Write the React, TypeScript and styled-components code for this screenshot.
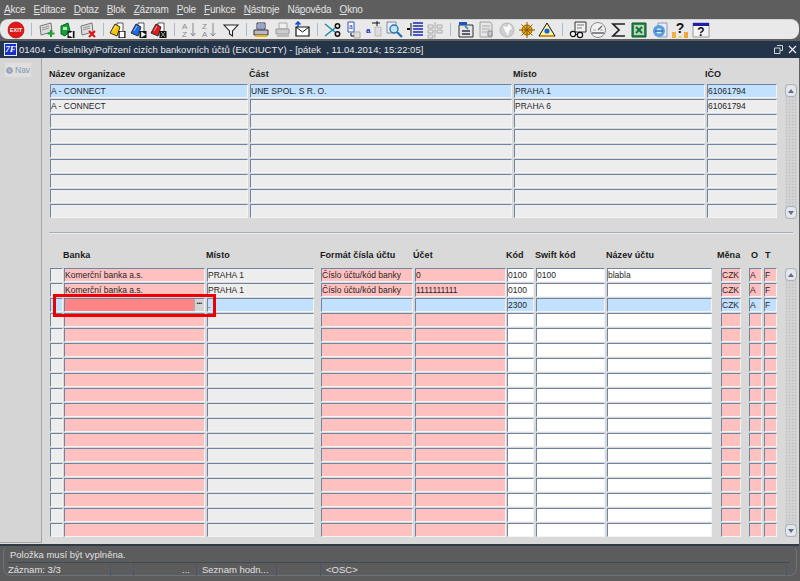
import React from "react";
import styled, { createGlobalStyle } from "styled-components";

const Global = createGlobalStyle`
  html, body { margin: 0; padding: 0; width: 800px; height: 581px; overflow: hidden; background: #5c5c5c; }
  body { font-family: "Liberation Sans", Arial, sans-serif; }
  #root { width: 800px; height: 581px; }
`;

const Page = styled.div`
  width: 800px; height: 581px; display: flex; flex-direction: column; background: #5e5e5e;
`;
const MenuBar = styled.nav`
  height: 19px; display: flex; align-items: center; padding-left: 4px; gap: 8.1px;
  font-size: 10px; color: #e2e2e2; flex: none; letter-spacing: -0.02em;
`;
const MenuItem = styled.span` u { text-underline-offset: 1px; } `;
const Toolbar = styled.div`
  height: 20px; flex: none; display: flex; align-items: center; padding-left: 6px;
  background: #e9e9e9; border-radius: 8px; margin-right: 1px;
  border-top: 1px solid #d2d2d2; box-sizing: border-box;
`;
const Tool = styled.span`
  width: 20.45px; height: 18px; flex: none; display: flex; align-items: center; justify-content: center;
`;
const ToolSep = styled.span`
  width: 1px; height: 13px; flex: none; margin: 0 4.6px; background: #a9bbd0;
`;
const TitleBar = styled.header`
  height: 17px; flex: none; margin-top: 2px; background: #243449; color: #e6e6e6;
  display: flex; align-items: center; padding: 0 3px 0 4px; font-size: 9.5px;
`;
const TitleLogo = styled.span`
  width: 13px; height: 13px; flex: none; background: #1530c8; border: 1px solid #e8e8ff; box-sizing: border-box;
  color: #fff; font: italic bold 9px/11px "Liberation Serif", serif; text-align: center; margin-right: 2px;
`;
const TitleText = styled.span` flex: 1; white-space: pre; `;
const WinButtons = styled.span` display: flex; gap: 5px; align-items: center; `;
const Body = styled.main`
  flex: 1; min-height: 0; display: flex; background: #d9d9d9; margin-right: 1px;
  border-bottom: 2px solid #303a44;
`;
const NavPane = styled.aside`
  width: 41px; flex: none; background: #d5d5d5; border-right: 1px solid #a6a6a6; border-bottom: 1px solid #a6a6a6;
  margin-bottom: 1px; padding-top: 5px;
`;
const NavTab = styled.div`
  width: 26px; height: 14px; margin-left: 5px; background: #dfdfdf; display: flex; align-items: center; gap: 2px;
  font-size: 8.5px; color: #8494b4; padding-left: 1px; box-sizing: border-box;
`;
const Canvas = styled.div`
  flex: 1; min-width: 0; padding: 11px 0 0 8px; display: flex; flex-direction: column;
`;
const Section = styled.section`
  display: flex; position: relative;
`;
const Table = styled.div` display: flex; flex-direction: column; gap: 1px; width: 728px; flex: none; `;
const HeaderRow = styled.div<{ $h: number }>`
  display: flex; height: ${(p) => p.$h}px; margin-bottom: -1px; align-items: flex-start;
`;
const HeaderCell = styled.span<{ $x: number }>`
  position: relative; left: ${(p) => p.$x}px; width: 0; white-space: nowrap; line-height: 11px;
  font-size: 9px; font-weight: 700; color: #1a1a1a; letter-spacing: 0.05px;
`;
const Row = styled.div` display: flex; height: 14px; `;
const tones: Record<string, string> = {
  gray: "#ededed", blue: "#c2e1ff", pink: "#ffc0c0", white: "#ffffff", focus: "#ff8585",
};
const Field = styled.div<{ $w: number; $ml: number; $tone: string }>`
  width: ${(p) => p.$w}px; margin-left: ${(p) => p.$ml}px; height: 14px; flex: none; box-sizing: border-box;
  background: ${(p) => tones[p.$tone]};
  border-top: 1px solid #6f83a3; border-left: 1px solid #6f83a3;
  border-right: 1px solid #f4f4f4; border-bottom: 1px solid #f4f4f4;
  font-size: 8.5px; line-height: 12px; color: #262626; white-space: nowrap;
  display: flex;
`;
const DotsButton = styled.span`
  width: 10px; height: 12px; flex: none; margin-left: auto; background: #d4d4d4; border-left: 1px solid #aaa; box-sizing: border-box;
  color: #111; font: bold 5px/9px "Liberation Sans", sans-serif; text-align: center;
`;
const ScrollBar = styled.div<{ $top: number; $h: number }>`
  width: 12px; height: ${(p) => p.$h}px; margin: ${(p) => p.$top}px 0 0 7px; flex: none; display: flex; flex-direction: column;
  background-color: #d2d2d2; background-image: radial-gradient(#bcbcbc 0.6px, transparent 0.7px); background-size: 3px 3px;
  justify-content: space-between;
`;
const ScrollBtn = styled.span`
  height: 13px; box-sizing: border-box; border: 1px solid #a5b0c4; border-radius: 4px; background: #e6e6e6;
  display: flex; align-items: center; justify-content: center;
`;
const Arrow = styled.i<{ $down?: boolean }>`
  width: 0; height: 0; border-left: 3px solid transparent; border-right: 3px solid transparent;
  ${(p) => (p.$down ? "border-top: 4px solid #5d6f90;" : "border-bottom: 4px solid #5d6f90;")}
`;
const Divider = styled.hr`
  width: 744px; height: 0; border: 0; border-top: 1px solid #a8aeb8; border-bottom: 1px solid #ececec;
  margin: 13px 0 16px -1px; flex: none;
`;
const Highlight = styled.div`
  position: absolute; left: 3px; top: 44px; width: 163px; height: 23px; border: 3px solid #ee0000; box-sizing: border-box;
`;
const StatusBar = styled.footer`
  height: 35px; flex: none; background: #5c5c5c; color: #e0e0e0; font-size: 9.5px; padding: 0 3px;
`;
const StatusFrame = styled.div`
  height: 30px; box-sizing: border-box; border: 1px solid #6a737e; border-top-color: transparent; border-radius: 6px 6px 8px 8px;
  padding-left: 4px; display: flex; flex-direction: column;
`;
const StatusMessage = styled.div`
  height: 15px; line-height: 16px; padding-left: 2px; border-bottom: 1px solid #3e4a58; margin-right: 6px;
`;
const StatusLine = styled.div` display: flex; height: 14px; line-height: 14px; `;
const StatusCell = styled.span<{ $w: number; $right?: boolean }>`
  width: ${(p) => p.$w}px; flex: none; box-sizing: border-box; border-right: 1px solid #45586e; padding: 0 6px 0 ${(p) => (p.$right ? 0 : 5)}px;
  text-align: ${(p) => (p.$right ? "right" : "left")}; white-space: nowrap; overflow: hidden;
  &:first-child { padding-left: 0; }
`;

const Svg = ({ children }: { children: React.ReactNode }) => (
  <svg width="18" height="18" viewBox="0 0 18 18">{children}</svg>
);
const Card = ({ fill = "#dcdcdc", stroke = "#777" }: { fill?: string; stroke?: string }) => (
  <g>
    <path d="M2 5l11-3 1 9-11 3z" fill={fill} stroke={stroke} strokeWidth="1" />
    <path d="M4 7l7-2M4 9l7-2" stroke="#999" strokeWidth="1" />
  </g>
);
const TiltFolder = ({ c }: { c: string }) => (
  <g>
    <path d="M8 2h6v9H8z" fill="#fff" stroke="#333" strokeWidth=".8" />
    <path d="M1 12L6 3l5 3-3 9z" fill={c} stroke="#222" strokeWidth=".9" />
    <path d="M4 10l3-5" stroke="#fff" strokeOpacity=".6" strokeWidth="1" />
  </g>
);
const Badge = ({ d }: { d: string }) => (
  <g>
    <rect x="9.5" y="10" width="7" height="7" fill="#111" />
    <path d={d} fill="#fff" stroke="#fff" strokeWidth=".6" />
  </g>
);

const icons: (React.ReactNode | null)[] = [
  <Svg>
    <circle cx="9" cy="9" r="8" fill="#e01818" stroke="#a00000" strokeWidth=".6" />
    <text x="9" y="11" fontSize="5.4" fontWeight="700" textAnchor="middle" fill="#fff" fontFamily="Liberation Sans">EXIT</text>
  </Svg>,
  null,
  <Svg><Card /><path d="M13 9v7M9.500 12.500h7" stroke="#18a030" strokeWidth="2.2" /></Svg>,
  <Svg><path d="M3 13V5l7-3 2 8-5 5z" fill="#10a030" stroke="#063" /><path d="M5 6h4v3H5z" fill="#bfe8b0" /><Badge d="M11 12v3h1.500l2 1.500v-6l-2 1.500z" /></Svg>,
  <Svg><Card /><path d="M10 10l6 6M16 10l-6 6" stroke="#e01010" strokeWidth="2" /></Svg>,
  null,
  <Svg><TiltFolder c="#f6c400" /><Badge d="M11 11h4v5h-4z M12 12h2" /></Svg>,
  <Svg><TiltFolder c="#1a6ae8" /><Badge d="M11.500 11l4 2.500-4 2.500z" /></Svg>,
  <Svg><TiltFolder c="#e01c1c" /><Badge d="M11 11l4 5M15 11l-4 5" /></Svg>,
  null,
  <Svg>
    <text x="1" y="8" fontSize="8" fill="#888" fontFamily="Liberation Sans">A</text>
    <text x="1" y="16" fontSize="8" fill="#888" fontFamily="Liberation Sans">Z</text>
    <path d="M12 2v13M9.500 12l2.500 3 2.500-3" stroke="#888" fill="none" />
  </Svg>,
  <Svg>
    <text x="1" y="8" fontSize="8" fill="#888" fontFamily="Liberation Sans">Z</text>
    <text x="1" y="16" fontSize="8" fill="#888" fontFamily="Liberation Sans">A</text>
    <path d="M12 2v13M9.500 12l2.500 3 2.500-3" stroke="#888" fill="none" />
  </Svg>,
  <Svg><path d="M2 4h14l-5.500 6v5l-3-2v-3z" fill="#f6f6f6" stroke="#222" strokeWidth="1.1" /></Svg>,
  null,
  <Svg>
    <path d="M5 2h8v6H5z" fill="#fff" stroke="#334" /><path d="M6 4h6M6 6h6" stroke="#2a4ab0" />
    <path d="M2 9h14v5H2z" fill="#b8b8c8" stroke="#334" /><path d="M3 15h12" stroke="#e8b800" strokeWidth="2" />
  </Svg>,
  <Svg>
    <path d="M6 2h8v6H6z" fill="#eee" stroke="#aaa" /><path d="M3 8h13v5H3z" fill="#ccc" stroke="#999" /><path d="M4 15h12" stroke="#bbb" strokeWidth="2" />
  </Svg>,
  <Svg>
    <path d="M3 6h13v9H3z" fill="#fff" stroke="#111" strokeWidth="1.2" /><path d="M3 6l6.500 5L16 6" fill="none" stroke="#111" />
    <path d="M5 1v5M2.500 3.500L5 1l2.500 2.500" stroke="#1050d0" strokeWidth="1.6" fill="none" />
  </Svg>,
  null,
  <Svg>
    <path d="M1 3l10 8M1 15l10-8" stroke="#158aa8" strokeWidth="1.4" />
    <circle cx="13.500" cy="5" r="2.200" fill="none" stroke="#111" strokeWidth="1.5" /><circle cx="13.500" cy="13" r="2.200" fill="none" stroke="#111" strokeWidth="1.5" />
  </Svg>,
  <Svg>
    <path d="M4 1h6v10H4z" fill="#fff" stroke="#2a50c0" />
    <text x="5" y="8" fontSize="6.500" fill="#2020c0" fontFamily="Liberation Sans">a</text>
    <path d="M10 11h6v6h-6z" fill="#ddd" stroke="#aaa" />
    <path d="M7 12v3h3" stroke="#111" fill="none" />
  </Svg>,
  <Svg>
    <text x="1" y="12" fontSize="8" fontWeight="700" fill="#2020c0" fontFamily="Liberation Sans">a</text>
    <path d="M7 2h8M12 0v5" stroke="#111" /><path d="M10 6h6v9h-6z" fill="#ddd" stroke="#bbb" />
  </Svg>,
  <Svg>
    <path d="M2 1h9v11H2z" fill="#eef" stroke="#7a8a9a" />
    <circle cx="9" cy="8" r="4" fill="#c4e4f4" stroke="#2878a8" strokeWidth="1.4" />
    <path d="M12 11l5 5" stroke="#2070b0" strokeWidth="2.200" />
  </Svg>,
  <Svg>
    <path d="M7 2h10M7 5h10M7 8h10M7 11h10M7 14h10" stroke="#1828b0" strokeWidth="1.4" />
    <path d="M5 2v13" stroke="#111" /><path d="M1 8h3" stroke="#111" strokeWidth="2" />
  </Svg>,
  <Svg>
    <path d="M2 4h5v3H2zM2 9h5v3H2zM2 14h5v3H2zM11 4h5v3h-5zM11 9h5v3h-5z" fill="#e8e8e8" stroke="#aaa" />
    <path d="M9 1v16" stroke="#aaa" />
  </Svg>,
  null,
  <Svg>
    <path d="M2 4h14v12H2z" fill="#e4e4e4" stroke="#333" /><path d="M2 1h8v3H2z" fill="#1a50c8" />
    <path d="M5 10h8M5 13h8" stroke="#334" strokeWidth="1.6" /><path d="M8 5l3 3" stroke="#18a" strokeWidth="1.5" />
  </Svg>,
  <Svg><path d="M3 1h10l2 2v13H3z" fill="#e6e6e6" stroke="#a0a0a0" /><path d="M5 5h8M5 8h8M5 11h5" stroke="#aaa" /><path d="M11 10h4v5h-4z" fill="#ccc" stroke="#888" /></Svg>,
  <Svg><circle cx="9" cy="9" r="7" fill="#cfcfcf" stroke="#b8b8b8" /><path d="M5 5l4 1 2-3 3 4-3 3-1 5-3-5z" fill="#fafafa" /></Svg>,
  <Svg>
    <circle cx="9" cy="9" r="5" fill="#f0b000" stroke="#8a6000" strokeWidth="1" /><circle cx="9" cy="9" r="2" fill="#ffe" stroke="#703" strokeWidth=".6" />
    <path d="M9 1v16M1 9h16M3.500 3.500l11 11M14.500 3.500l-11 11" stroke="#8a5a00" strokeWidth="1" />
  </Svg>,
  <Svg>
    <path d="M9 2L17 15H1z" fill="#fff4a0" stroke="#111" strokeWidth="1" />
    <circle cx="9" cy="10" r="2.600" fill="#1a60e0" /><path d="M2 15h14" stroke="#d8a000" strokeWidth="1.6" />
  </Svg>,
  null,
  <Svg>
    <path d="M6 1h11v10H6z" fill="#f2f2f2" stroke="#333" /><path d="M8 4h7M8 7h5" stroke="#777" />
    <circle cx="4" cy="13" r="2.600" fill="#fff" stroke="#111" strokeWidth="1.2" /><circle cx="11" cy="14" r="2.600" fill="#fff" stroke="#111" strokeWidth="1.2" />
    <path d="M6.600 13.500h2" stroke="#111" />
  </Svg>,
  <Svg><circle cx="9" cy="9" r="7.500" fill="#f2f2f2" stroke="#888" /><path d="M3 12h12M9 9l4-4" stroke="#666" strokeWidth="1.3" /><path d="M4 9h3M11 9h3" stroke="#aaa" /></Svg>,
  <Svg><path d="M15 3H3l6 6-6 6h12" fill="none" stroke="#222" strokeWidth="1.7" /></Svg>,
  <Svg>
    <path d="M2 2h14v14H2z" fill="#2a8a50" stroke="#0c5028" /><path d="M4 4h10v10H4z" fill="#b8d8b8" />
    <path d="M6 6l6 6M12 6l-6 6" stroke="#107038" strokeWidth="1.8" />
  </Svg>,
  <Svg>
    <path d="M7 2h9v14H7z" fill="#e8eef8" stroke="#8898b8" />
    <circle cx="8" cy="10" r="6" fill="#5a9ee0" /><circle cx="8" cy="10" r="2.600" fill="#e4f0fb" /><path d="M4 10h8" stroke="#2268b8" strokeWidth="1.5" />
  </Svg>,
  <Svg>
    <text x="9" y="12" fontSize="14" fontWeight="700" textAnchor="middle" fill="#111" fontFamily="Liberation Sans">?</text>
    <path d="M1 11h4v6H1z" fill="#f0b040" /><path d="M13 11h4v6h-4z" fill="#f0a838" /><path d="M7 15h4v2H7z" fill="#f4d080" />
  </Svg>,
  <Svg>
    <path d="M1 2h16v14H1z" fill="#f4f4f4" stroke="#999" /><path d="M1 2h16v3H1z" fill="#2020b0" />
    <text x="9" y="15" fontSize="12" fontWeight="700" textAnchor="middle" fill="#111" fontFamily="Liberation Sans">?</text>
  </Svg>,
];

const menus: [string, string, string][] = [
  ["", "A", "kce"], ["", "E", "ditace"], ["", "D", "otaz"], ["", "B", "lok"], ["", "Z", "áznam"],
  ["", "P", "ole"], ["", "F", "unkce"], ["", "N", "ástroje"], ["Ná", "p", "ověda"], ["", "O", "kno"],
];

type Col = { w: number; ml: number; tone: string };
const topCols: Col[] = [
  { w: 198, ml: 0, tone: "gray" }, { w: 262, ml: 2, tone: "gray" }, { w: 191, ml: 2, tone: "gray" }, { w: 70, ml: 2, tone: "gray" },
];
const topData = [
  ["A - CONNECT", "UNE SPOL. S R. O.", "PRAHA 1", "61061794"],
  ["A - CONNECT", "", "PRAHA 6", "61061794"],
];
const bottomCols: Col[] = [
  { w: 13, ml: 0, tone: "gray" }, { w: 141, ml: 1, tone: "pink" }, { w: 107, ml: 2, tone: "gray" },
  { w: 92, ml: 7, tone: "pink" }, { w: 91, ml: 2, tone: "pink" }, { w: 27, ml: 1, tone: "white" },
  { w: 69, ml: 2, tone: "white" }, { w: 105, ml: 2, tone: "white" }, { w: 20, ml: 9, tone: "pink" },
  { w: 13, ml: 8, tone: "pink" }, { w: 13, ml: 2, tone: "pink" },
];
const bottomData = [
  ["", "Komerční banka a.s.", "PRAHA 1", "Číslo účtu/kód banky", "0", "0100", "0100", "blabla", "CZK", "A", "F"],
  ["", "Komerční banka a.s.", "PRAHA 1", "Číslo účtu/kód banky", "1111111111", "0100", "", "", "CZK", "A", "F"],
  ["", "", ".", "", "", "2300", "", "", "CZK", "A", "F"],
];
const topHead: [string, number][] = [["Název organizace", -1], ["Část", 199], ["Místo", 463], ["IČO", 655]];
const bottomHead: [string, number][] = [
  ["Banka", 13], ["Místo", 156], ["Formát čísla účtu", 270], ["Účet", 363], ["Kód", 456], ["Swift kód", 485],
  ["Název účtu", 556], ["Měna", 667], ["O", 701], ["T", 715],
];

const Heads = ({ items, h }: { items: [string, number][]; h: number }) => (
  <HeaderRow $h={h}>
    {items.map(([t, x]) => <HeaderCell key={t + x} $x={x}>{t}</HeaderCell>)}
  </HeaderRow>
);
const Scroll = ({ top, h }: { top: number; h: number }) => (
  <ScrollBar $top={top} $h={h}>
    <ScrollBtn><Arrow /></ScrollBtn>
    <ScrollBtn><Arrow $down /></ScrollBtn>
  </ScrollBar>
);

export default function App() {
  return (
    <Page>
      <Global />
      <MenuBar>
        {menus.map(([a, b, c]) => <MenuItem key={b + c}>{a}<u>{b}</u>{c}</MenuItem>)}
      </MenuBar>
      <Toolbar>
        {icons.map((ic, i) => (ic === null ? <ToolSep key={i} /> : <Tool key={i}>{ic}</Tool>))}
      </Toolbar>
      <TitleBar>
        <TitleLogo>7F</TitleLogo>
        <TitleText>01404 - Číselníky/Pořízení cizích bankovních účtů (EKCIUCTY) - [pátek  , 11.04.2014; 15:22:05]</TitleText>
        <WinButtons>
          <svg width="9" height="9" viewBox="0 0 9 9"><path d="M3 .5h5.500v5H6.500M.5 3h5.500v5.500H.5z" fill="none" stroke="#cfd6de" /></svg>
          <svg width="9" height="9" viewBox="0 0 9 9"><path d="M1 1l7 7M8 1L1 8" stroke="#eef" strokeWidth="1.2" /></svg>
        </WinButtons>
      </TitleBar>
      <Body>
        <NavPane>
          <NavTab>
            <svg width="7" height="7" viewBox="0 0 7 7"><circle cx="3.500" cy="3.500" r="2.800" fill="#a8b4c8" stroke="#7f8fa8" /></svg>
            Nav
          </NavTab>
        </NavPane>
        <Canvas>
          <Section>
            <Table>
              <Heads items={topHead} h={15} />
              {Array.from({ length: 9 }, (_, r) => (
                <Row key={r}>
                  {topCols.map((c, i) => (
                    <Field key={i} $w={c.w} $ml={c.ml} $tone={r === 0 ? "blue" : c.tone}>{topData[r]?.[i] ?? ""}</Field>
                  ))}
                </Row>
              ))}
            </Table>
            <Scroll top={15} h={135} />
          </Section>
          <Divider />
          <Section>
            <Table>
              <Heads items={bottomHead} h={18} />
              {Array.from({ length: 18 }, (_, r) => (
                <Row key={r}>
                  {bottomCols.map((c, i) => {
                    const focused = r === 2 && i === 1;
                    const tone = focused ? "focus" : r === 2 ? "blue" : c.tone;
                    return (
                      <Field key={i} $w={c.w} $ml={c.ml} $tone={tone}>
                        {bottomData[r]?.[i] ?? ""}
                        {focused && <DotsButton>•••</DotsButton>}
                      </Field>
                    );
                  })}
                </Row>
              ))}
            </Table>
            <Scroll top={18} h={269} />
            <Highlight />
          </Section>
        </Canvas>
      </Body>
      <StatusBar>
        <StatusFrame>
          <StatusMessage>Položka musí být vyplněna.</StatusMessage>
          <StatusLine>
            <StatusCell $w={103}>Záznam: 3/3</StatusCell>
            <StatusCell $w={23} />
            <StatusCell $w={63} $right>...</StatusCell>
            <StatusCell $w={80}>Seznam hodn...</StatusCell>
            <StatusCell $w={44} />
            <StatusCell $w={466}>&lt;OSC&gt;</StatusCell>
          </StatusLine>
        </StatusFrame>
      </StatusBar>
    </Page>
  );
}
